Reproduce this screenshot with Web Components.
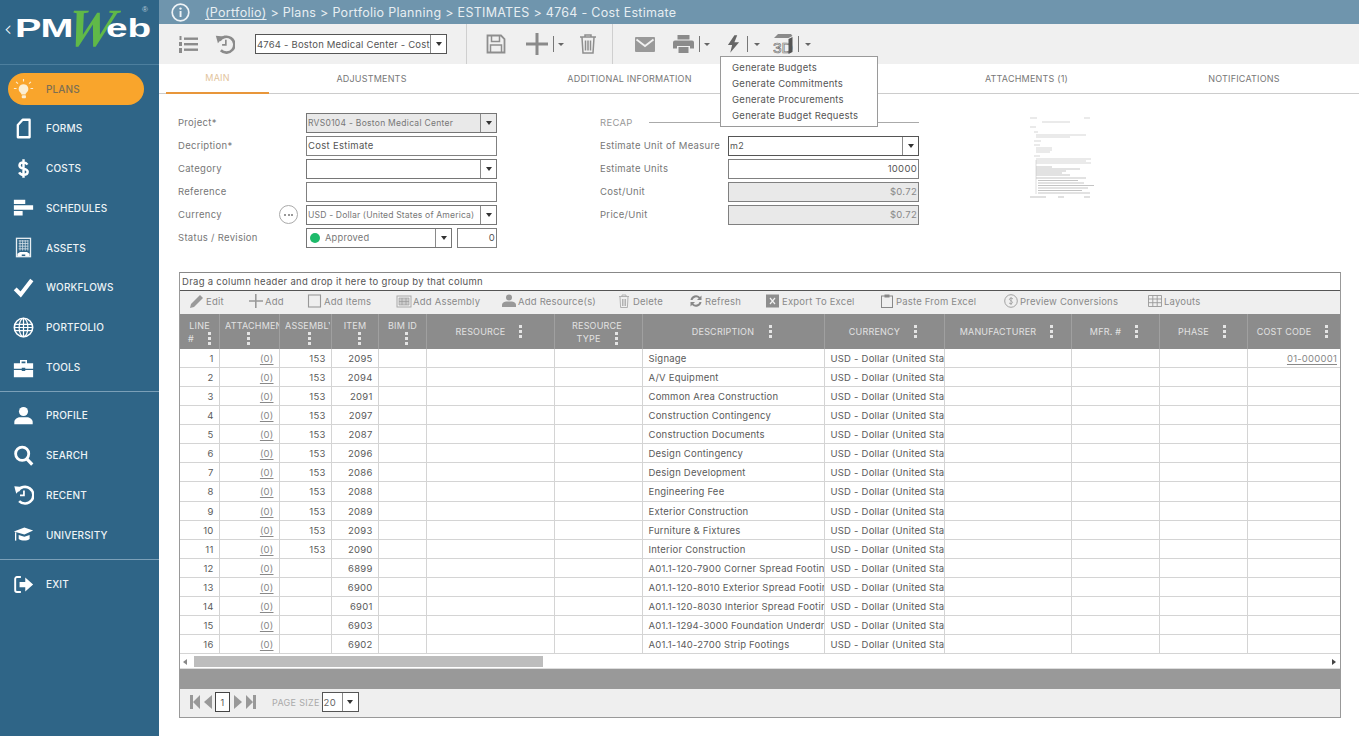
<!DOCTYPE html>
<html lang="en"><head><meta charset="utf-8"><title>PMWeb</title>
<style>
html,body{margin:0;height:100%;overflow:hidden;background:#fff;font-family:Inter,"Open Sans",sans-serif}
</style></head><body>
<pm-app></pm-app>
<script>
const ICONS={
bulb:'<g fill="#fbeed2"><path d="M12 7a5.5 5.5 0 0 0-3.4 9.8c.7.6 1 1.2 1 2h4.8c0-.8.3-1.4 1-2A5.5 5.5 0 0 0 12 7z"/><rect x="10" y="19.6" width="4.8" height="3.4" rx="1"/></g><g stroke="#fbeed2" stroke-width="1.3"><path d="M12 1v3M3.5 4.5l2.2 2M20.5 4.5l-2.2 2M1 12h3M20 12h3"/></g>',
forms:'<path d="M11 2h8v20H5.500V8z" fill="none" stroke="#fff" stroke-width="2.600" stroke-linejoin="round"/>',
dollar:'<path d="M16.5 7.5C15.5 5.8 14 5 12 5c-2.8 0-4.6 1.4-4.6 3.5 0 5 9.4 2.4 9.4 7.3 0 2.1-2 3.4-4.8 3.4-2.4 0-4-1-5-2.8M12 1.5v21" fill="none" stroke="#fff" stroke-width="2.8"/>',
sched:'<path fill="#fff" d="M1 3h13v5H1zM1 9.500h22v5H1zM1 16h10v5H1z"/>',
assets:'<rect x="4" y="1.5" width="16" height="21" fill="none" stroke="#e8eef2" stroke-width="1.5"/><path d="M6.5 4.5h11M6.5 7.5h11M6.5 10.5h11M6.5 13.5h11M8 3.5v12M11 3.5v12M14 3.5v12M17 3.5v12" stroke="#d0dde5" stroke-width="1"/><path fill="#fff" d="M5 22v-3l3-2h8l3 2v3h-5v-2h-4v2z"/>',
check:'<path d="M2.500 13.500l6.300 6.500L21.500 3.500" fill="none" stroke="#fff" stroke-width="4.600"/>',
globe:'<g fill="none" stroke="#fff" stroke-width="1.4"><circle cx="12" cy="12" r="10.5" stroke-width="1.8"/><ellipse cx="12" cy="12" rx="5" ry="10.5"/><path d="M12 1.5v21M2 8.5h20M2 15.5h20M1.5 12h21"/></g>',
case:'<path fill="#fff" d="M8 3.500h8V7h-1.800V5.200H9.800V7H8zM1 7h22v6.500H14v-1.300h-4v1.300H1zM1 14.800h9V16h4v-1.200h9V23H1z"/>',
user:'<circle cx="12" cy="7.500" r="5.200" fill="#fff"/><path fill="#fff" d="M1.500 22v-2.500c0-3.500 4-5.500 6.500-5.500h8c2.500 0 6.500 2 6.500 5.500V22z"/>',
search:'<circle cx="10.500" cy="10" r="7.500" fill="none" stroke="#fff" stroke-width="3.200"/><path d="M15.500 15.500L22 22.500" stroke="#fff" stroke-width="3.600"/>',
recent:'<path d="M5.500 8A9.500 9.500 0 1 1 7 19.500" fill="none" stroke="#fff" stroke-width="3"/><path fill="#fff" d="M1.500 2.500l9 1-6.800 7.500z"/><path d="M12.500 7.500v5.500H8" fill="none" stroke="#fff" stroke-width="2"/>',
cap:'<path fill="#fff" d="M1 8.500L13 4l10 3.500L13 12zM6.500 12.500l6.500 2.200 6-2.200V17c-3 2.300-9 2.300-12.500 0z"/><path d="M3 9.500V19" stroke="#fff" stroke-width="1.500"/>',
exit:'<path d="M9 3.500H4.500A2 2 0 0 0 2.500 5.500v13a2 2 0 0 0 2 2H9" fill="none" stroke="#fff" stroke-width="2.200"/><path fill="#fff" d="M7.500 9h6.500V4l9 8-9 8v-5H7.500z"/>',
};
const svg=(k,w,h,extra='')=>`<svg width="${w}" height="${h}" viewBox="0 0 24 24" ${extra}>${ICONS[k]}</svg>`;

class PmNavItem extends HTMLElement{
  connectedCallback(){
    const active=this.hasAttribute('active');
    this.attachShadow({mode:'open'}).innerHTML=`<style>
    :host{display:block;height:39.8px;padding:4px 15px 0 8px;box-sizing:border-box}
    .i{height:32px;display:flex;align-items:center;border-radius:16px;${active?'background:#f9a52c;color:#7d6f52;width:136px':'color:#edf3f6'}}
    .ic{width:30px;margin-right:8px;display:flex;justify-content:center;align-items:center;flex:none}
    .t{font:500 10px Inter,sans-serif;letter-spacing:.15px}
    </style><div class="i"><span class="ic">${svg(this.getAttribute('icon'),21,21)}</span><span class="t"><slot></slot></span></div>`;
  }
}
customElements.define('pm-nav-item',PmNavItem);

class PmSidebar extends HTMLElement{
  connectedCallback(){
    const items=[['bulb','PLANS',1],['forms','FORMS'],['dollar','COSTS'],['sched','SCHEDULES'],['assets','ASSETS'],['check','WORKFLOWS'],['globe','PORTFOLIO'],['case','TOOLS'],0,['user','PROFILE'],['search','SEARCH'],['recent','RECENT'],['cap','UNIVERSITY'],0,['exit','EXIT']];
    this.attachShadow({mode:'open'}).innerHTML=`<style>
    :host{display:flex;flex-direction:column;width:159px;flex:none;background:#2f6587;height:736px;box-sizing:border-box}
    .logo{height:64px;border-bottom:1px solid #4d7f9e;display:flex;align-items:center;padding-left:4px;box-sizing:content-box;overflow:hidden;position:relative;color:#fff}
    .lt{font:300 20px "DejaVu Sans",sans-serif;transform:scaleY(1.1);margin-top:-9px;width:11px}
    .pm{font:700 25px "Liberation Sans",sans-serif;display:inline-block;transform:scaleX(1.58);transform-origin:left;width:53px;letter-spacing:-.5px;margin-top:-7px}
    .w{font:italic 700 54px "Liberation Serif",serif;color:#60b948;transform:skewX(-10deg);display:inline-block;margin:-9px -6px 0 -1px;transform-origin:left;position:relative}
    .eb{font:700 25px "Liberation Sans",sans-serif;display:inline-block;transform:scaleX(1.55);transform-origin:left;margin:-7px 0 0 -3px}
    .r{position:absolute;left:142px;top:5px;font:8px "Liberation Sans",sans-serif;color:#b9ccd8}
    .nav{padding-top:3.500px}
    hr{border:0;border-top:1px solid #7ba0b8;margin:4px 0 3.500px}
    hr.x{margin-bottom:4.500px}
    </style><div class="logo"><span class="lt">‹</span><span class="pm">PM</span><span class="w">W</span><span class="eb">eb</span><span class="r">®</span></div>
    <div class="nav">${items.map((i,n)=>i?`<pm-nav-item icon="${i[0]}"${i[2]?' active':''}>${i[1]}</pm-nav-item>`:`<hr${n>10?' class="x"':''}>`).join('')}</div>`;
  }
}
customElements.define('pm-sidebar',PmSidebar);

class PmBreadcrumb extends HTMLElement{
  connectedCallback(){
    this.attachShadow({mode:'open'}).innerHTML=`<style>
    :host{display:flex;align-items:center;height:24px;background:#6f95ad;color:#e7eef2;font:12.500px Inter,sans-serif;letter-spacing:.29px;flex:none;padding-left:12px;white-space:nowrap}
    svg{margin-right:15px;flex:none} u{text-underline-offset:2px}
    </style><svg width="19" height="19" viewBox="0 0 19 19"><circle cx="9.500" cy="9.500" r="8.300" fill="none" stroke="#eef3f6" stroke-width="1.700"/><rect x="8.600" y="8" width="1.900" height="6" fill="#eef3f6"/><circle cx="9.500" cy="5.600" r="1.200" fill="#eef3f6"/></svg><span><u>(Portfolio)</u> &gt; Plans &gt; Portfolio Planning &gt; ESTIMATES &gt; 4764 - Cost Estimate</span>`;
  }
}
customElements.define('pm-breadcrumb',PmBreadcrumb);

class PmSelect extends HTMLElement{
  connectedCallback(){
    const dis=this.hasAttribute('disabled');
    this.attachShadow({mode:'open'}).innerHTML=`<style>
    :host{display:flex;height:20px;box-sizing:border-box;border:1px solid ${this.getAttribute('bc')||'#767676'};background:${dis?'#e9e9e9':'#fff'};font:${this.getAttribute('fs')||'9.500'}px Inter,sans-serif;color:${this.getAttribute('color')||'#666'};letter-spacing:${this.getAttribute('ls')||'.28'}px;min-width:0}
    .v{flex:1;min-width:0;overflow:hidden;white-space:nowrap;display:flex;align-items:center;padding-left:1px}
    .a{width:15px;flex:none;border-left:1px solid #8a8a8a;display:flex;align-items:center;justify-content:center;background:${dis?'#ececec':'#fff'}}
    .a i{border:3.500px solid transparent;border-top:4px solid #333;border-bottom:0}
    </style><div class="v"><slot></slot></div><div class="a"><i></i></div>`;
  }
}
customElements.define('pm-select',PmSelect);

class PmInput extends HTMLElement{
  connectedCallback(){
    this.attachShadow({mode:'open'}).innerHTML=`<style>
    :host{display:flex;align-items:center;height:20px;box-sizing:border-box;border:1px solid #808080;background:#fff;font:9.500px Inter,sans-serif;color:#555;letter-spacing:.3px;padding:0 1px;white-space:nowrap;overflow:hidden}
    :host([right]){justify-content:flex-end}
    :host([disabled]){background:#e9e9e9;color:#888}
    </style><slot></slot>`;
  }
}
customElements.define('pm-input',PmInput);

class PmToolbar extends HTMLElement{
  connectedCallback(){
    this.attachShadow({mode:'open'}).innerHTML=`<style>
    :host{display:flex;align-items:center;height:40px;background:#f0f0f0;flex:none;padding-left:19px;position:relative}
    svg{display:block;flex:none}
    .sep{width:1px;height:40px;background:#cfcfcf}
    pm-select{width:192px}
    .sp{width:1px;height:16px;background:#777;flex:none}
    .dr{border:3px solid transparent;border-top:3.500px solid #666;border-bottom:0;flex:none;margin-left:4px}
    </style>
    <svg width="20" height="19" viewBox="0 0 20 19" style="margin-right:17px"><g fill="#8b8b8b"><rect x="6" y="2.500" width="14" height="2.400"/><rect x="6" y="8" width="14" height="2.400"/><rect x="6" y="13.500" width="14" height="2.400"/><rect x="1.500" y="1" width="2" height="4"/><rect x="1" y="7" width="3" height="4"/><rect x="1" y="13" width="3" height="5"/></g></svg>
    <svg width="20" height="20" viewBox="0 0 24 24" style="margin-right:20px"><path d="M5.500 8A9.500 9.500 0 1 1 7 19.500" fill="none" stroke="#8b8b8b" stroke-width="3.200"/><path fill="#8b8b8b" d="M1 2l9.500 1-7 8z"/><path d="M13 7v6H8.500" fill="none" stroke="#8b8b8b" stroke-width="2"/></svg>
    <pm-select color="#555" bc="#555" ls=".2"><span>4764 - Boston Medical Center - Cost Estimate</span></pm-select>
    <span class="sep" style="margin-left:19px"></span>
    <svg width="20" height="20" viewBox="0 0 20 20" style="margin-left:19px"><path d="M1.500 1.500h13.500l3.500 3.500v13.500h-17z" fill="none" stroke="#8e8e8e" stroke-width="1.800"/><path d="M5.500 2v5.500h8V2M4.500 18v-7h11v7" fill="none" stroke="#8e8e8e" stroke-width="1.500"/></svg>
    <svg width="22" height="22" viewBox="0 0 22 22" style="margin-left:20px"><path fill="#8a8a8a" d="M9.500 0h3v9.500H22v3h-9.500V22h-3v-9.500H0v-3h9.500z"/></svg>
    <span class="sp" style="margin-left:5px"></span><i class="dr"></i>
    <svg width="18" height="20" viewBox="0 0 18 20" style="margin-left:15px"><path d="M1 3h16M6 3V1h6v2M3 3.500l1 15.500h10l1-15.500M6.500 6.500v10M9 6.500v10M11.500 6.500v10" fill="none" stroke="#8e8e8e" stroke-width="1.500"/></svg>
    <span class="sep" style="margin-left:15px"></span>
    <svg width="20" height="15" viewBox="0 0 20 15" style="margin-left:22px"><rect width="20" height="15" rx="1" fill="#999"/><path d="M1.500 2.500L10 9l8.500-6.500" fill="none" stroke="#f0f0f0" stroke-width="1.800"/></svg>
    <svg width="21" height="18" viewBox="0 0 21 18" style="margin-left:18px"><path fill="#8b8b8b" d="M4.500 0h12v4.500h-12zM2 5.500h17a2 2 0 0 1 2 2v6h-4v-2.500H4v2.500H0v-6a2 2 0 0 1 2-2zM5.500 12h10v6h-10z"/></svg>
    <span class="sp" style="margin-left:5px"></span><i class="dr"></i>
    <svg width="13" height="18" viewBox="0 0 14 19" style="margin-left:17px"><path fill="#666" d="M8 0L1 10.500h4.500L3.500 19 13 7.500H8L11 0z"/></svg>
    <span class="sp" style="margin-left:7px"></span><i class="dr" style="margin-left:6px"></i>
    <svg width="20" height="22" viewBox="0 0 20 22" style="margin-left:13px"><path fill="#8a8a8a" d="M1 5L5 1h13l1.500 2-4 2z"/><text x="0" y="20" font-family="Liberation Sans,sans-serif" font-size="15.500" fill="#f4f4f4" stroke="#777" stroke-width=".7">3D</text><path fill="#555" d="M15.500 6l4-2v15l-4 2z"/></svg>
    <span class="sp" style="margin-left:5px"></span><i class="dr" style="margin-left:6px"></i>`;
  }
}
customElements.define('pm-toolbar',PmToolbar);

class PmMenu extends HTMLElement{
  connectedCallback(){
    this.attachShadow({mode:'open'}).innerHTML=`<style>
    :host{position:absolute;left:561px;top:56px;width:158px;height:71px;box-sizing:border-box;background:#fff;border:1px solid #9a9a9a;padding:3px 0 0 11px;z-index:5;display:flex;flex-direction:column;font:9.500px Inter,sans-serif;color:#555;letter-spacing:.25px}
    div{height:16px;line-height:16px;white-space:nowrap}
    </style><div>Generate Budgets</div><div>Generate Commitments</div><div>Generate Procurements</div><div>Generate Budget Requests</div>`;
  }
}
customElements.define('pm-menu',PmMenu);

class PmTabs extends HTMLElement{
  connectedCallback(){
    const t=[['MAIN',109,1],['ADJUSTMENTS',205],['ADDITIONAL INFORMATION',311],['',140],['ATTACHMENTS (1)',203],['NOTIFICATIONS',232]];
    this.attachShadow({mode:'open'}).innerHTML=`<style>
    :host{display:flex;height:30px;flex:none;border-bottom:1px solid #ccc;box-sizing:border-box;padding-left:1px;font:9px Inter,sans-serif;letter-spacing:.2px;color:#777}
    div{display:flex;align-items:center;justify-content:center;box-sizing:border-box;padding-bottom:2px;height:30px;white-space:nowrap;flex:none}
    .a{color:#e2c39c;border-bottom:2px solid #e8963a;margin-left:6px}
    </style>${t.map(x=>`<div class="${x[2]?'a':''}" style="width:${x[2]?x[1]-6:x[1]}px">${x[0]}</div>`).join('')}`;
  }
}
customElements.define('pm-tabs',PmTabs);

class PmForm extends HTMLElement{
  connectedCallback(){
    this.attachShadow({mode:'open'}).innerHTML=`<style>
    :host{display:flex;flex:none;height:178px;box-sizing:border-box;padding:18.500px 0 0 19px;font:9.500px Inter,sans-serif;color:#777;letter-spacing:.3px}
    .l{display:grid;grid-template-columns:102px 26px 191px;grid-auto-rows:20px;row-gap:3.100px;width:319px;align-items:center}
    .r{display:grid;grid-template-columns:128px 191px;grid-auto-rows:20px;row-gap:3.100px;width:319px;margin-left:103px;align-items:center}
    .b{width:19px;height:19px;box-sizing:border-box;border:1px solid #aaa;border-radius:50%;margin-left:-1px;display:flex;align-items:center;justify-content:center;gap:1.500px}
    .b i{width:2px;height:2px;border-radius:50%;background:#777}
    .st{display:grid;grid-template-columns:146px 40px;column-gap:5px;grid-column:3;width:191px}
    .dot{width:10px;height:10px;border-radius:50%;background:#1dba6a;margin:0 5px 0 2px;flex:none}
    .recap{display:flex;align-items:center;grid-column:1/3;color:#999}
    .recap i{flex:1;height:1px;background:#aaa;margin-left:16px}
    svg{margin:2px 0 0 109px;flex:none}
    </style>
    <div class="l">
      <span>Project*</span><pm-select disabled style="grid-column:3" fs="8.500" color="#777">RVS0104 - Boston Medical Center</pm-select>
      <span>Decription*</span><pm-input style="grid-column:3">Cost Estimate</pm-input>
      <span>Category</span><pm-select style="grid-column:3"></pm-select>
      <span>Reference</span><pm-input style="grid-column:3"></pm-input>
      <span>Currency</span><span class="b"><i></i><i></i><i></i></span><pm-select fs="8.600" color="#777" ls=".15">USD - Dollar (United States of America)</pm-select>
      <span>Status / Revision</span><div class="st"><pm-select fs="9.300" color="#777" ls=".2"><span class="dot"></span>Approved</pm-select><pm-input right>0</pm-input></div>
    </div>
    <div class="r">
      <div class="recap">RECAP<i></i></div>
      <span>Estimate Unit of Measure</span><pm-select bc="#555" fs="9" color="#555">m2</pm-select>
      <span>Estimate Units</span><pm-input right>10000</pm-input>
      <span>Cost/Unit</span><pm-input right disabled>$0.72</pm-input>
      <span>Price/Unit</span><pm-input right disabled>$0.72</pm-input>
    </div>
    <svg width="66" height="84" viewBox="0 0 66 84"><rect width="66" height="84" fill="#fff"/><g stroke="#aaa" stroke-width=".5"><path d="M2 3h7M56 3h6M14 7h28M2 12h6M6 17h4M8 20h50M8 22h34M6 26h7M6 30h6M8 33h16M8 35h16M8 37h14M6 41h6M8 44h55M8 46h50M8 48h55"/></g><g stroke="#888" stroke-width=".5"><path d="M8 52h16M8 54h44M8 56h30M8 58h26M8 60h34M8 63h50M10 65.500h40M10 68h46M10 70.500h56M10 73h50M10 75.500h44M10 78h52"/></g><path d="M8 45v34" stroke="#bbb" stroke-width=".5"/><path d="M2 82h16M30 82h6M56 82h6" stroke="#999" stroke-width=".6"/></svg>`;
  }
}
customElements.define('pm-form',PmForm);

class PmGrid extends HTMLElement{
  connectedCallback(){
    const cols=[40,60,52,47,48,128,88,182,120,127,88,88,92];
    const tpl=cols.map(c=>c+'px').join(' ');
    const k0='<svg class="k" width="3" height="13" viewBox="0 0 3 13"><path fill="#e4e4e4" d="M0 0h3v3H0zM0 5h3v3H0zM0 10h3v3H0z"/></svg>';
    const k=k0.replace('class="k"','class="k m"');
    const kd=k0.replace('class="k"','class="k d"');
    const ks=k0.replace('class="k"','class="k s"');
    const H=[['LINE','# '+k,'f'],['<span class="cl" style="width:54px">ATTACHMENTS</span>',ks,'c'],['<span class="cl" style="width:45px">ASSEMBLY</span>',ks,'c'],['ITEM',ks,'f'],['BIM ID',ks,'f'],[0,'RESOURCE '+k],['RESOURCE','TYPE '+k],[0,'DESCRIPTION '+kd],[0,'CURRENCY '+k],[0,'MANUFACTURER '+k],[0,'MFR. # '+k],[0,'PHASE '+k],[0,'COST CODE '+k]];
    const D=[['1','153','2095','Signage'],['2','153','2094','A/V Equipment'],['3','153','2091','Common Area Construction'],['4','153','2097','Construction Contingency'],['5','153','2087','Construction Documents'],['6','153','2096','Design Contingency'],['7','153','2086','Design Development'],['8','153','2088','Engineering Fee'],['9','153','2089','Exterior Construction'],['10','153','2093','Furniture &amp; Fixtures'],['11','153','2090','Interior Construction'],['12','','6899','A01.1-120-7900 Corner Spread Footings'],['13','','6900','A01.1-120-8010 Exterior Spread Footings'],['14','','6901','A01.1-120-8030 Interior Spread Footings'],['15','','6903','A01.1-1294-3000 Foundation Underdrain'],['16','','6902','A01.1-140-2700 Strip Footings']];
    const tools=[['edit','Edit',59],['plus','Add',59],['box','Add Items',89],['asm','Add Assembly',105],['usr','Add Resource(s)',115],['del','Delete',72],['ref','Refresh',77],['xl','Export To Excel',114],['clip','Paste From Excel',124],['conv','Preview Conversions',144],['lay','Layouts',100]];
    const T={
      edit:'<path fill="#9a9a9a" d="M1 15l1-4L11 2l3 3-9 9z"/>',
      plus:'<path fill="#999" d="M7 1h1.600v6.200H15v1.600H8.600V15H7V8.800H1V7.200h6z"/>',
      box:'<rect x="1.500" y="2" width="12" height="12" fill="none" stroke="#999" stroke-width="1.100"/>',
      asm:'<rect x="1" y="3" width="14" height="11" fill="none" stroke="#aaa"/><path d="M3 5h10v7H3z" fill="#ccc" stroke="#999" stroke-width=".6"/><path d="M6 5v7M10 5v7M3 8.500h10" stroke="#999" stroke-width=".7"/>',
      usr:'<circle cx="8" cy="4.500" r="3" fill="#999"/><path fill="#999" d="M1 14v-2q0-3 4-3.500h6q4 .5 4 3.500v2z"/>',
      del:'<path d="M3 3.500h10M6 3.500V2h4v1.500M4 4l.6 10.500h6.800L12 4M6.500 6v7M8 6v7M9.500 6v7" fill="none" stroke="#aaa" stroke-width=".9"/>',
      ref:'<path d="M2.500 7A5.500 5.500 0 0 1 12 4l1.500-1.500V7H9l1.700-1.700A3.800 3.800 0 0 0 4.500 7zM13.500 9A5.500 5.500 0 0 1 4 12l-1.500 1.500V9H7l-1.700 1.700A3.800 3.800 0 0 0 11.500 9z" fill="#888"/>',
      xl:'<rect x="1" y="1.500" width="13" height="13" fill="#8e8e8e"/><path d="M5 5l5 6M10 5l-5 6" stroke="#f2f2f2" stroke-width="1.200"/>',
      clip:'<rect x="2.500" y="3" width="11" height="11.500" fill="none" stroke="#888" stroke-width="1"/><rect x="5.500" y="1.500" width="5" height="3" fill="#888"/>',
      conv:'<circle cx="8" cy="8" r="6.300" fill="none" stroke="#999" stroke-width=".9"/><path d="M10 5.800Q8 4.500 6.500 5.800c-1 1.400 3.400 2 3 3.900-.4 1.200-2.200 1.300-3.500.3M8 4v8" fill="none" stroke="#999" stroke-width=".8"/>',
      lay:'<path d="M1.500 2.500h13v11h-13zM1.500 6h13M1.500 9.700h13M5.800 2.500v11M10.200 2.500v11" fill="none" stroke="#999" stroke-width=".9"/>'
    };
    this.attachShadow({mode:'open'}).innerHTML=`<style>
    :host{display:flex;flex-direction:column;margin-left:20px;width:1162px;height:446px;box-sizing:border-box;border:1px solid #999;border-top-color:#888;font:9.500px Inter,sans-serif;color:#666;flex:none;position:relative}
    .group{height:17px;border-bottom:1px solid #555;background:#fff;letter-spacing:.3px;color:#555;display:flex;align-items:center;padding-left:2px;flex:none}
    .tools{height:23px;box-sizing:border-box;padding-bottom:3px;background:#efefef;display:grid;grid-template-columns:${tools.map(t=>t[2]+'px').join(' ')};padding-left:9px;align-items:center;flex:none;color:#8a8a8a;letter-spacing:.2px;white-space:nowrap}
    .tools div{display:flex;align-items:center}
    .tools svg{margin-right:1px;flex:none}
    .hd{display:grid;grid-template-columns:${tpl};height:35px;background:#8c8c8c;color:#e2e2e2;flex:none;font-size:9px;letter-spacing:.2px}
    .hd>div{border-right:1px solid #a0a0a0;display:flex;flex-direction:column;align-items:center;justify-content:center;overflow:hidden;white-space:nowrap;box-sizing:border-box;line-height:13px;min-width:0;padding-right:3px}
    .hd>div.f{padding-right:0}
    .hd>div.c{padding-right:0;align-items:flex-start;padding-left:5px}
    .hd>div.c .k{margin-left:22px}
    .hd>div.c:nth-child(3) .k{margin-left:23px}
    .hd>div:last-child{border-right:0}
    .hd p{margin:0;display:flex;align-items:center;justify-content:center}
    .k{flex:none}
    .k.m{margin-left:14px}
    .k.d{margin-left:15px}
    .k.s{margin-left:8px}
    .cl{display:block;overflow:hidden;text-align:left}
    .body{display:grid;grid-template-columns:${tpl};grid-template-rows:repeat(16,1fr);height:305px;flex:none;color:#5a5a5a;letter-spacing:.22px}
    .body>div{border-right:1px solid #d4d4d4;border-bottom:1px solid #d4d4d4;display:flex;align-items:center;padding:1px 5.500px 0;overflow:hidden;white-space:nowrap;box-sizing:border-box;min-width:0}
    .body>div.n{justify-content:flex-end}
    .body>div:nth-child(13n){border-right:0;padding-right:3px}
    u{text-underline-offset:1.500px;color:#888}
    .sb{height:15px;flex:none;position:relative;background:#fff;border-bottom:1px solid #ddd;box-sizing:border-box}
    .th{position:absolute;left:14px;top:2px;width:349px;height:11px;background:#bdbdbd}
    .sl,.sr{position:absolute;top:4.500px;border:3px solid transparent}
    .sl{left:3px;border-right:4px solid #888;border-left:0}
    .sr{right:4px;border-left:4px solid #444;border-right:0}
    .band{height:20px;background:#999;flex:none}
    .pg{flex:1;background:#efefef;display:flex;align-items:center;padding:0 0 2px 10px;color:#aaa;font-size:9px;letter-spacing:.3px}
    .pg svg{flex:none;display:block}
    .box{width:15px;height:20px;box-sizing:border-box;border:1px solid #444;background:#fff;color:#555;display:flex;align-items:center;justify-content:center;margin:0 3px 0 2px}
    pm-select{width:37px}
    </style>
    <div class="group">Drag a column header and drop it here to group by that column</div>
    <div class="tools">${tools.map(t=>`<div><svg width="16" height="16" viewBox="0 0 16 16">${T[t[0]]}</svg>${t[1]}</div>`).join('')}</div>
    <div class="hd">${H.map(h=>`<div class="${h[2]||''}">${h[0]?`<p>${h[0]}</p>`:''}<p>${h[1]}</p></div>`).join('')}</div>
    <div class="body">${D.map((r,i)=>`<div class="n">${r[0]}</div><div class="n"><u>(0)</u></div><div class="n">${r[1]}</div><div class="n">${r[2]}</div><div></div><div></div><div></div><div>${r[3]}</div><div>USD - Dollar (United States of America)</div><div></div><div></div><div></div><div class="n">${i==0?'<u>01-000001</u>':''}</div>`).join('')}</div>
    <div class="sb"><i class="sl"></i><div class="th"></div><i class="sr"></i></div>
    <div class="band"></div>
    <div class="pg">
      <svg width="10" height="14" viewBox="0 0 10 14"><path fill="#999" d="M0 0h3v14H0zM10 0v14L3 7z"/></svg>
      <svg width="9" height="14" viewBox="0 0 9 14" style="margin-left:4px"><path fill="#999" d="M8 0v14L0 7z"/></svg>
      <span class="box">1</span>
      <svg width="9" height="14" viewBox="0 0 9 14"><path fill="#999" d="M1 0v14l8-7z"/></svg>
      <svg width="10" height="14" viewBox="0 0 10 14" style="margin-left:4px"><path fill="#999" d="M0 0v14l7-7zM7 0h3v14H7z"/></svg>
      <span style="margin:0 2px 0 16px">PAGE SIZE</span>
      <pm-select fs="9.500" color="#666" bc="#555">20</pm-select>
    </div>`;
  }
}
customElements.define('pm-grid',PmGrid);

class PmApp extends HTMLElement{
  connectedCallback(){
    this.attachShadow({mode:'open'}).innerHTML=`<style>
    :host{display:flex;width:1359px;height:736px;overflow:hidden;background:#fff}
    main{flex:1;min-width:0;display:flex;flex-direction:column;position:relative}
    </style><pm-sidebar></pm-sidebar><main><pm-breadcrumb></pm-breadcrumb><pm-toolbar></pm-toolbar><pm-tabs></pm-tabs><pm-form></pm-form><pm-grid></pm-grid><pm-menu></pm-menu></main>`;
  }
}
customElements.define('pm-app',PmApp);
</script></body></html>
